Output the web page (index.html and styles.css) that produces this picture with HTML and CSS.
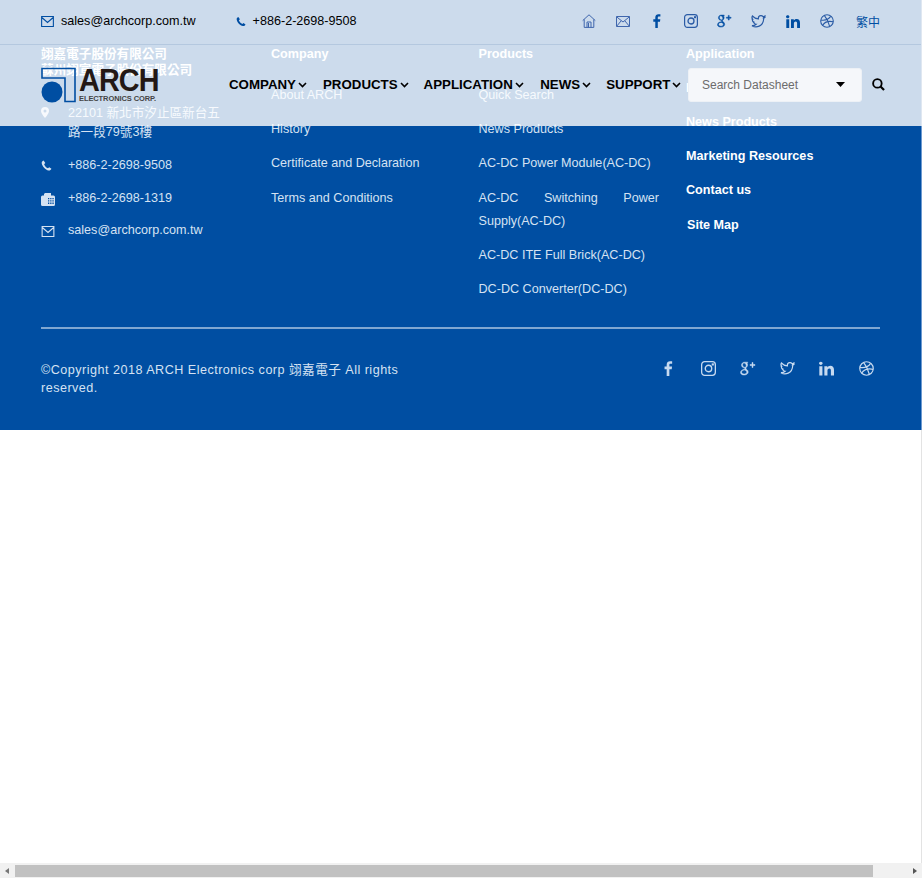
FILE: index.html
```html
<!DOCTYPE html>
<html lang="zh-Hant">
<head>
<meta charset="utf-8">
<title>ARCH Electronics</title>
<link rel="stylesheet" href="styles.css">
</head>
<body>
<svg class="sprite" width="0" height="0" aria-hidden="true">
  <defs>
    <symbol id="i-mail" viewBox="0 0 14 12"><path d="M.6.6h12.8v10.800H.6zM.8 1.600 7 7l6.200-5.400" fill="none" stroke="currentColor" stroke-width="1.200"/></symbol>
    <symbol id="i-phone" viewBox="0 0 12 12"><path d="M2.800.5C1.300 1.200.6 2.200.8 3.600c.5 3.400 4 7.300 7.500 7.900 1.300.2 2.400-.5 3.100-1.900L9 7.800 7.600 9C5.800 8.300 4 6.200 3.400 4.500l1.300-1.300z" fill="currentColor"/></symbol>
    <symbol id="i-f" viewBox="0 0 8 14"><path d="M2.300 14V7.700H.3V5.200h2V3.400C2.300 1.200 3.600.2 5.400.2c.9 0 1.700.1 2 .1v2.300H6c-1 0-1.200.5-1.200 1.200v1.400h2.500l-.3 2.500H4.800V14z" fill="currentColor"/></symbol>
    <symbol id="i-ig" viewBox="0 0 14 14"><g fill="none" stroke="currentColor"><rect x=".6" y=".6" width="12.800" height="12.800" rx="2.800" stroke-width="1.200"/><circle cx="7" cy="7" r="3" stroke-width="1.300"/></g><rect x="10" y="2.200" width="2" height="2" fill="currentColor"/></symbol>
    <symbol id="i-gp" viewBox="0 0 16 14"><path d="M7.800.7H4.600C2.800.7 1.500 2 1.500 3.600c0 1.500 1.200 2.700 2.700 2.700.3 0 .5 0 .7-.1-.3.500-.2 1 .2 1.500C2.700 7.800.5 9 .5 10.900c0 1.700 1.700 2.600 3.700 2.600 2.600 0 4-1.500 4-3 0-2.200-2.400-2.700-2.400-3.700 0-1 1.800-1.300 1.800-3.400 0-1-.5-1.800-1-2.100h1zM4 1.500c1.200 0 2.100 1.200 2.200 2.500.1 1.100-.5 1.800-1.400 1.800-1.100 0-2.100-1.100-2.200-2.400C2.500 2.300 3.100 1.500 4 1.500zm.6 7c1.500.5 2.200 1.200 2.200 2.100 0 1-.9 2-2.500 2-1.600 0-2.700-.9-2.700-2 0-1.300 1.500-2.100 3-2.100zM12 1v2H10v1h2v2h1V4h2V3h-2V1z" fill="currentColor" stroke="currentColor" stroke-width=".5"/></symbol>
    <symbol id="i-tw" viewBox="0 0 15 13"><path d="M14 2.300l-1.300.3.900-1.500-1.500.6C11.500 1 10.600.6 9.700.7 8.200.9 7.200 2.200 7.400 3.800 5 3.700 2.900 2.600 1.400 1 .7 2.300 1 3.800 2.200 4.800l-1-.3c0 1.300.9 2.400 2.300 2.800l-1 .1c.4 1.100 1.400 1.800 2.600 1.900C4 10.300 2.600 10.800 1 10.700c4 2.400 11.300 1.100 11.700-7z" fill="none" stroke="currentColor" stroke-width="1.200"/></symbol>
    <symbol id="i-in" viewBox="0 0 14 13"><path d="M.3 4.300h2.900V13H.3zM1.700.2c1 0 1.700.7 1.700 1.500S2.700 3.200 1.700 3.200 0 2.500 0 1.700 .7.200 1.700.2zM5 4.300h2.800v1.200C8.300 4.700 9.300 4 10.600 4 13 4 14 5.500 14 8v5h-2.900V8.300c0-1.200-.4-1.900-1.400-1.900-1 0-1.800.8-1.800 2V13H5z" fill="currentColor"/></symbol>
    <symbol id="i-db" viewBox="0 0 14 14"><g fill="none" stroke="currentColor" stroke-width="1.100"><circle cx="7" cy="7" r="6.300"/><path d="M4.300 1.400C6.500 4 8.700 8.500 9.700 12.600M.9 6c3.200.5 7.200 0 9.800-3.600M2.500 11.500C4.200 8.600 8 6.700 13.200 7.800"/></g></symbol>
    <symbol id="i-chev" viewBox="0 0 9 6"><path d="M1 1l3.500 3.500L8 1" fill="none" stroke="currentColor" stroke-width="1.600"/></symbol>
  </defs>
</svg>

<header class="site-header">
  <div class="topbar">
    <div class="contact">
      <span class="contact-item"><svg class="ic-mail"><use href="#i-mail"/></svg>sales@archcorp.com.tw</span>
      <span class="contact-item"><svg class="ic-phone"><use href="#i-phone"/></svg>+886-2-2698-9508</span>
    </div>
    <div class="top-icons">
      <span class="cell"><svg class="ti ti-home" viewBox="0 0 14 14"><path d="M7 .8.7 6.600M7 .8l6.300 5.800M2.200 5.400v8h9.600v-8M5 13.400V8h4v5.400M6.500 9v4.400" fill="none" stroke="currentColor"/></svg></span>
      <span class="cell"><svg class="ti ti-env" viewBox="0 0 14 11"><path d="M.5.500h13v10H.5zM.7.900 7 6l6.300-5.100M.7 10.200 5.200 4.800M13.300 10.200 8.800 4.800" fill="none" stroke="currentColor"/></svg></span>
      <span class="cell"><svg class="ti ti-f"><use href="#i-f"/></svg></span>
      <span class="cell"><svg class="ti ti-ig"><use href="#i-ig"/></svg></span>
      <span class="cell"><svg class="ti ti-gp"><use href="#i-gp"/></svg></span>
      <span class="cell"><svg class="ti ti-tw"><use href="#i-tw"/></svg></span>
      <span class="cell"><svg class="ti ti-in"><use href="#i-in"/></svg></span>
      <span class="cell"><svg class="ti ti-db"><use href="#i-db"/></svg></span>
      <span class="lang">繁中</span>
    </div>
  </div>
  <div class="navbar">
    <a class="logo" href="#">
      <svg class="logo-mark" viewBox="0 0 35 36"><path d="M1 1.500h33v33H24V11H1z" fill="none" stroke="#004ea2" stroke-width="1.600"/><circle cx="11" cy="25" r="10.500" fill="#004ea2"/></svg>
      <span class="logo-text"><span class="logo-name">ARCH</span><span class="logo-sub">ELECTRONICS CORP.</span></span>
    </a>
    <nav class="menu">
      <a href="#">COMPANY<svg class="chev"><use href="#i-chev"/></svg></a>
      <a href="#">PRODUCTS<svg class="chev"><use href="#i-chev"/></svg></a>
      <a href="#">APPLICATION<svg class="chev"><use href="#i-chev"/></svg></a>
      <a href="#">NEWS<svg class="chev"><use href="#i-chev"/></svg></a>
      <a href="#">SUPPORT<svg class="chev"><use href="#i-chev"/></svg></a>
    </nav>
    <div class="search-box"><span>Search Datasheet</span><svg class="caret" viewBox="0 0 9 5"><path d="M0 0h9L4.500 5z"/></svg></div>
    <svg class="search-icon" viewBox="0 0 14 14"><circle cx="5.800" cy="5.800" r="4.600" fill="none" stroke="currentColor" stroke-width="2"/><path d="M9.200 9.200 13 13" stroke="currentColor" stroke-width="2.400"/></svg>
  </div>
</header>

<footer class="site-footer">
  <div class="cols">
    <section class="col col-info">
      <h4 class="co-names">翊嘉電子股份有限公司<br>蘇州翊宣電子股份有限公司</h4>
      <ul class="info">
        <li><svg class="ic-pin" viewBox="0 0 8 11"><path d="M4 0a4 4 0 0 0-4 4c0 2.500 4 7 4 7s4-4.500 4-7a4 4 0 0 0-4-4zm0 5.500a1.500 1.500 0 1 1 0-3 1.500 1.500 0 0 1 0 3z" fill="currentColor"/></svg><span>22101 新北市汐止區新台五路一段79號3樓</span></li>
        <li><svg class="ic-info-phone"><use href="#i-phone"/></svg><span>+886-2-2698-9508</span></li>
        <li><svg class="ic-fax" viewBox="0 0 14 13"><path d="M4 0h6v2.500h2.500A1.500 1.500 0 0 1 14 4v7.500a1.500 1.500 0 0 1-1.500 1.500h-11A1.500 1.500 0 0 1 0 11.500V4a1.500 1.500 0 0 1 1.500-1.500H3V1zM7 5v1.300h1.300V5zm2.200 0v1.300h1.300V5zm2.200 0v1.300h1.300V5zM7 7.300v1.300h1.300V7.300zm2.200 0v1.300h1.300V7.300zm2.200 0v1.300h1.300V7.300zM7 9.600v1.300h1.300V9.600zm2.200 0v1.300h1.300V9.600zm2.200 0v1.300h1.300V9.600z" fill="currentColor" fill-rule="evenodd"/></svg><span>+886-2-2698-1319</span></li>
        <li><svg class="ic-info-mail"><use href="#i-mail"/></svg><span>sales@archcorp.com.tw</span></li>
      </ul>
    </section>
    <section class="col">
      <h4>Company</h4>
      <ul class="links">
        <li><a href="#">About ARCH</a></li>
        <li><a href="#">History</a></li>
        <li><a href="#">Certificate and Declaration</a></li>
        <li><a href="#">Terms and Conditions</a></li>
      </ul>
    </section>
    <section class="col">
      <h4>Products</h4>
      <ul class="links">
        <li><a href="#">Quick Search</a></li>
        <li><a href="#">News Products</a></li>
        <li><a href="#">AC-DC Power Module(AC-DC)</a></li>
        <li><a href="#">AC-DC Switching Power Supply(AC-DC)</a></li>
        <li><a href="#">AC-DC ITE Full Brick(AC-DC)</a></li>
        <li><a href="#">DC-DC Converter(DC-DC)</a></li>
      </ul>
    </section>
    <section class="col">
      <h4>Application</h4>
      <ul class="strong-links">
        <li><a href="#">Product</a></li>
        <li><a href="#">News Products</a></li>
        <li><a href="#">Marketing Resources</a></li>
        <li><a href="#">Contact us</a></li>
        <li class="sitemap"><a href="#">Site Map</a></li>
      </ul>
    </section>
  </div>
  <div class="bottom">
    <p class="copyright">©Copyright 2018 ARCH Electronics corp 翊嘉電子 All rights reserved.</p>
    <div class="socials">
      <svg class="si si-f"><use href="#i-f"/></svg>
      <svg class="si si-ig"><use href="#i-ig"/></svg>
      <svg class="si si-gp"><use href="#i-gp"/></svg>
      <svg class="si si-tw"><use href="#i-tw"/></svg>
      <svg class="si si-in"><use href="#i-in"/></svg>
      <svg class="si si-db"><use href="#i-db"/></svg>
    </div>
  </div>
</footer>

<div class="hscroll"><i class="arrow-l"></i><b class="thumb"></b><i class="arrow-r"></i></div>
</body>
</html>
```
FILE: styles.css
```css
* { box-sizing: border-box; }
html, body { margin: 0; padding: 0; background: #fff; overflow: hidden; height: 100%; }
body { font-family: "Liberation Sans", "Noto Sans CJK TC", Arial, sans-serif; font-size: 12.600px; color: #000; position: relative; box-shadow: inset -1px 0 #e3e3e3; }
a { color: inherit; text-decoration: none; }
ul { list-style: none; margin: 0; padding: 0; }
h4 { margin: 0; font-size: 12.600px; font-weight: 700; line-height: 16px; color: #fff; }
svg { display: block; flex: none; }
.sprite { position: absolute; }

/* Header overlays the footer with a translucent wash */
.site-header { position: absolute; top: 0; left: 0; width: 922px; height: 126px; background: rgba(255,255,255,.8); border-right: 1px solid #dfe7f1; z-index: 2; }
.topbar { height: 45px; border-bottom: 1px solid #b4c8df; padding: 0 41px 2px; display: flex; justify-content: space-between; align-items: center; }
.contact { display: flex; gap: 40px; }
.contact-item { display: flex; align-items: center; color: #000; }
.ic-mail { width: 13px; height: 11px; color: #004ea2; margin-right: 7px; }
.ic-phone { width: 10px; height: 11px; color: #004ea2; margin-right: 7px; }
.top-icons { display: flex; align-items: center; color: #004ea2; }
.cell { width: 34px; display: flex; justify-content: center; align-items: center; }
.ti { height: 14px; }
.ti-home { width: 14px; color: #3f66ad; }
.ti-env { width: 14px; height: 11px; color: #3f66ad; }
.ti-f { width: 8px; }
.ti-ig { width: 14px; color: #2a5ba5; }
.ti-gp { width: 15px; }
.ti-tw { width: 15px; height: 13px; color: #2a5ba5; }
.ti-in { width: 14px; height: 13px; }
.ti-db { width: 14px; color: #2a5ba5; }
.lang { font-size: 12px; white-space: nowrap; margin-left: 12px; margin-top: 1px; }

.navbar { height: 81px; padding: 0 0 2px 41px; display: flex; align-items: center; position: relative; }
.logo { flex: none; display: flex; width: 188px; height: 36px; }
.logo-mark { width: 35px; height: 36px; }
.logo-text { display: flex; flex-direction: column; margin-left: 3px; color: #231815; }
.logo-name { font-size: 32px; line-height: 26px; font-weight: 700; letter-spacing: -1px; transform: scaleX(.9); transform-origin: left; }
.logo-sub { font-size: 7.500px; line-height: 8px; font-weight: 700; letter-spacing: -.1px; color: #444; margin-top: 2px; white-space: nowrap; }
.menu { flex: none; display: flex; width: 459px; font-size: 13.300px; font-weight: 700; color: #000; }
.menu a { display: flex; align-items: center; margin-right: 16px; }
.menu a:nth-child(2), .menu a:nth-child(4) { margin-right: 15px; }
.menu a:nth-child(3) { margin-right: 16.500px; }
.chev { width: 9px; height: 6px; margin-left: 2px; margin-top: 1px; }
.search-box { flex: none; width: 174px; height: 34px; background: #f5f7fa; border-radius: 3px; border: 1px solid #edf1f6; font-size: 12px; color: #6c6c6c; display: flex; align-items: center; justify-content: space-between; padding: 0 16px 0 13px; }
.caret { width: 9px; height: 5px; fill: #000; }
.search-icon { flex: none; width: 13px; height: 13px; margin-left: 10px; color: #000; }

/* Footer */
.site-footer { width: 922px; height: 430px; background: #004ea2; border-right: 1px solid #6d9ad0; padding: 46px 41px 0; color: #d5e2f2; }
.cols { display: grid; grid-template-columns: 230px 207.500px 207.500px 195px; height: 281px; }
.col { padding-right: 27px; }
.col-info { padding-right: 26px; }
.co-names { color: #fff; }
.info { margin-top: 26px; line-height: 19px; }
.info li { display: flex; align-items: flex-start; margin-bottom: 14px; }
.info li:nth-child(3) { margin-bottom: 13px; }
.info span { padding-left: 13px; display: block; width: 166px; }
.info svg { width: 14px; }
.info .ic-info-phone { width: 11px; margin-right: 3px; }
.ic-pin { height: 11px; margin-top: 3px; padding-right: 6px; }
.ic-info-phone { height: 11px; margin-top: 4px; }
.ic-fax { height: 13px; margin-top: 4px; }
.ic-info-mail { height: 11px; margin-top: 5px; }
.links { margin-top: 22px; line-height: 23px; }
.links li { margin-bottom: 11.200px; text-align: justify; }
.strong-links { margin-top: 15px; font-weight: 700; color: #fff; line-height: 23px; }
.strong-links li { margin-bottom: 11.100px; }
.sitemap { padding-left: 1px; margin-top: 12px; }
.bottom { border-top: 2px solid rgba(255,255,255,.5); display: flex; justify-content: space-between; padding-top: 32px; }
.copyright { margin: 0; width: 362px; line-height: 18px; letter-spacing: .48px; color: #d5e2f2; }
.socials { display: flex; align-items: center; height: 14px; padding-right: 6px; color: #c7daf0; }
.si { height: 15px; }
.si-f { width: 9px; margin-right: 28px; }
.si-ig { width: 15px; margin-right: 24px; }
.si-gp { width: 16px; margin-right: 24px; }
.si-tw { width: 15px; margin-right: 24px; }
.si-in { width: 15px; margin-right: 25px; }
.si-db { width: 15px; }

/* Browser's scrollbar as it appears in the screenshot */
.hscroll { position: fixed; left: 0; right: 0; bottom: 0; height: 15px; background: #f1f1f1; }
.thumb { position: absolute; left: 15px; top: 2px; width: 858px; height: 12px; background: #c1c1c1; }
.arrow-l, .arrow-r { position: absolute; top: 5px; width: 0; height: 0; border-top: 3px solid transparent; border-bottom: 3px solid transparent; }
.arrow-l { left: 5px; border-right: 4px solid #777; }
.arrow-r { right: 5px; border-left: 4px solid #555; }
```
